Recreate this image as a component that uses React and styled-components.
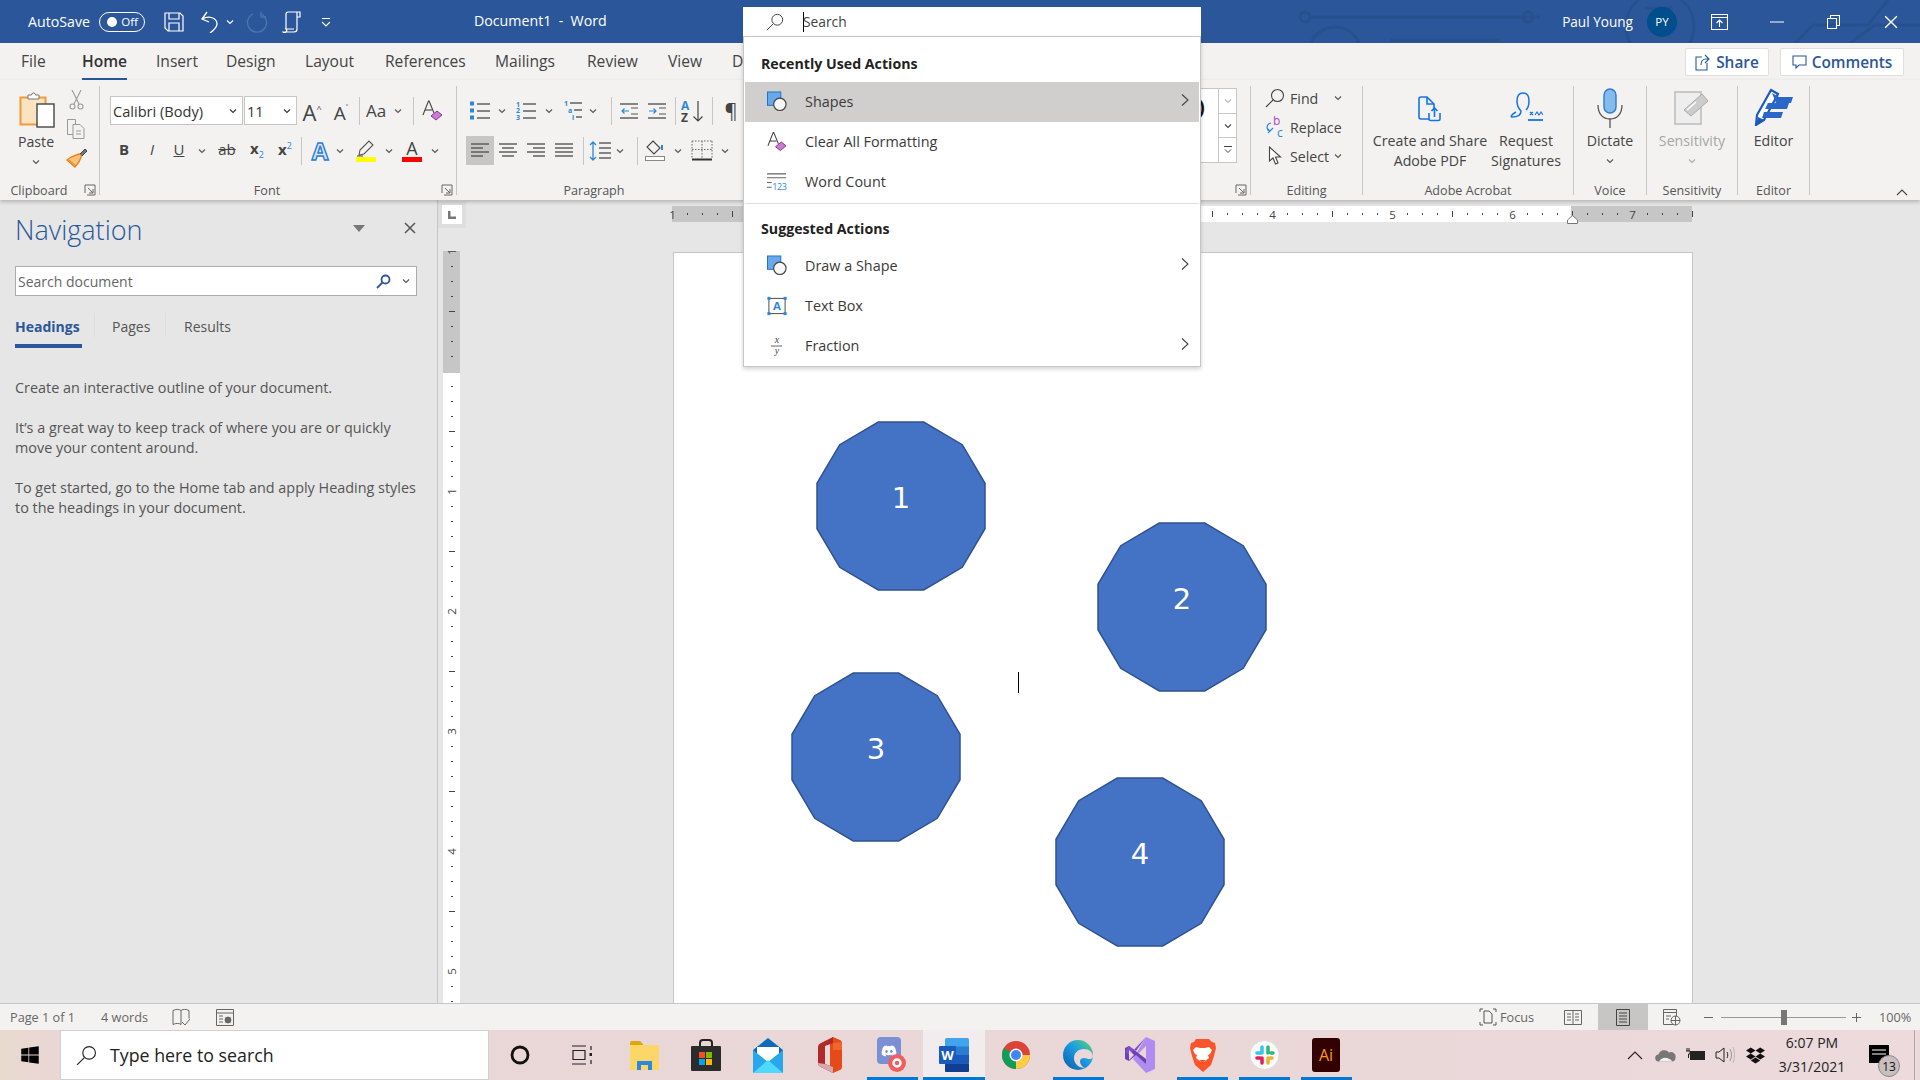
import React from "react";
import styled, { createGlobalStyle } from "styled-components";
import { FaWindows, FaDropbox, FaDiscord } from "react-icons/fa";

const BLUE = "#2b579a";
const INK = "#444";
const UI = `"Open Sans", "Noto Sans", sans-serif`;

const Global = createGlobalStyle`
  html, body { margin: 0; height: 100%; overflow: hidden; background: #e6e6e6; }
  * { box-sizing: border-box; }
  #root { height: 100%; }
`;

const Screen = styled.div`
  position: relative;
  width: 1920px;
  height: 1080px;
  display: flex;
  flex-direction: column;
  overflow: hidden;
  font-family: ${UI};
  color: ${INK};
`;

/* ---------- title bar ---------- */
const TitleBar = styled.div`
  position: relative;
  height: 43px;
  flex: none;
  display: flex;
  align-items: center;
  padding: 0 1px 0 28px;
  background: ${BLUE};
  color: #fff;
  font-size: 14.2px;
  overflow: hidden;
`;
const Circuit = styled.svg`
  position: absolute;
  left: 1240px;
  top: 0;
`;
const AutoSave = styled.span`
  position: relative;
  width: 71px;
`;
const Toggle = styled.span`
  position: relative;
  width: 46px;
  height: 20px;
  flex: none;
  display: flex;
  align-items: center;
  justify-content: space-between;
  padding: 0 6px 0 7px;
  border: 1px solid #fff;
  border-radius: 10px;
  font-size: 11.5px;
  &::before {
    content: "";
    width: 10px;
    height: 10px;
    border-radius: 50%;
    background: #fff;
  }
`;
const Qat = styled.span`
  position: relative;
  flex: none;
  width: ${(p) => p.$w}px;
  margin-left: ${(p) => p.$ml || 0}px;
  display: flex;
  justify-content: center;
  align-items: center;
`;
const DocTitle = styled.span`
  position: relative;
  margin-left: 127px;
  margin-top: -2px;
  white-space: pre;
`;
const UserName = styled.span`
  position: relative;
  margin-left: auto;
  font-size: 13.6px;
`;
const Avatar = styled.span`
  position: relative;
  width: 30px;
  height: 30px;
  margin: 0 14px;
  border-radius: 50%;
  background: #004e8c;
  display: flex;
  align-items: center;
  justify-content: center;
  font-size: 11.5px;
`;
const WinBtn = styled.span`
  position: relative;
  width: 57px;
  display: flex;
  justify-content: center;
`;

/* ---------- ribbon tabs ---------- */
const TabBar = styled.div`
  height: 37px;
  flex: none;
  display: flex;
  align-items: flex-start;
  padding: 5px 16px 0 21px;
  background: #f3f2f1;
`;
const Tab = styled.span`
  width: ${(p) => p.$w}px;
  flex: none;
  height: 32px;
  padding-top: 2px;
  font-size: 15.6px;
  line-height: 22px;
  white-space: nowrap;
  overflow: visible;
  & > b {
    display: inline-block;
    height: 32px;
    font-weight: 600;
    color: #333;
    border-bottom: 4px solid ${BLUE};
  }
`;
const TabActions = styled.div`
  margin-left: auto;
  display: flex;
  gap: 11px;
`;
const ActionButton = styled.span`
  width: ${(p) => p.$w}px;
  height: 28px;
  display: flex;
  align-items: center;
  justify-content: center;
  gap: 5px;
  background: #fff;
  border: 1px solid #e1dfdd;
  border-radius: 2px;
  color: ${BLUE};
  font-size: 15.4px;
  font-weight: 600;
`;

/* ---------- ribbon ---------- */
const Ribbon = styled.div`
  position: relative;
  z-index: 2;
  height: 120px;
  flex: none;
  display: flex;
  padding: 6px 0 5px;
  background: #f3f2f1;
  box-shadow: 0 2px 4px rgba(0, 0, 0, 0.22);
`;
const Group = styled.div`
  position: relative;
  width: ${(p) => p.$w}px;
  flex: none;
  display: flex;
  flex-direction: column;
  border-right: 1px solid #c8c6c4;
`;
const GroupBody = styled.div`
  flex: 1;
  min-height: 0;
  display: flex;
  flex-direction: ${(p) => (p.$column ? "column" : "row")};
  gap: ${(p) => p.$gap || 0}px;
  padding: ${(p) => p.$pad || "0"};
`;
const GroupLabel = styled.div`
  height: 18px;
  margin-bottom: -5px;
  line-height: 18px;
  font-size: 12.6px;
  text-align: center;
  white-space: nowrap;
  padding-right: ${(p) => p.$pr || 0}px;
  color: #555;
`;
const Launcher = styled.svg`
  position: absolute;
  right: 3px;
  bottom: -1px;
`;
const ToolRow = styled.div`
  height: 29px;
  display: flex;
  align-items: center;
  padding-left: ${(p) => p.$pl || 0}px;
`;
const Tool = styled.span`
  width: ${(p) => p.$w}px;
  margin-left: ${(p) => p.$ml || 0}px;
  height: 29px;
  flex: none;
  display: flex;
  flex-direction: column;
  align-items: center;
  justify-content: center;
  padding-bottom: ${(p) => (p.$up ? 3 : 0)}px;
  background: ${(p) => (p.$on ? "#c8c6c4" : "transparent")};
  font-size: ${(p) => p.$size || 15}px;
  font-weight: ${(p) => p.$weight || 400};
  font-style: ${(p) => (p.$italic ? "italic" : "normal")};
  text-decoration: ${(p) => (p.$under ? "underline" : "none")};
  color: #444;
  & sub, & sup { font-size: 9px; color: #2b88d8; font-weight: 400; }
`;
const Strike = styled.span`
  text-decoration: line-through;
`;
const Combo = styled.span`
  width: ${(p) => p.$w}px;
  margin-right: 1px;
  height: 29px;
  flex: none;
  display: flex;
  align-items: center;
  justify-content: space-between;
  padding: 0 5px 0 2px;
  background: #fff;
  border: 1px solid #c8c6c4;
  font-size: 14.6px;
  color: #333;
`;
const Vr = styled.span`
  width: 1px;
  height: 28px;
  flex: none;
  margin-left: ${(p) => p.$ml || 0}px;
  background: #c8c6c4;
`;
const ColorBar = styled.span`
  width: 20px;
  height: 5px;
  background: ${(p) => p.$c};
`;
const StackA = styled.span`
  font-size: 18px;
  line-height: 18px;
  color: #444;
`;
const EffectA = styled.span`
  font-size: 24px;
  line-height: 28px;
  font-weight: 700;
  color: #d6e8f8;
  -webkit-text-stroke: 1.4px #2b7cd3;
`;
const GrowA = styled.span`
  font-size: ${(p) => p.$s}px;
  line-height: 20px;
  color: #444;
  & > i {
    font-style: normal;
    font-size: 9px;
    vertical-align: 9px;
    color: #444;
  }
`;
const PasteCol = styled.div`
  width: 60px;
  margin-left: 6px;
  padding-top: 5px;
  display: flex;
  flex-direction: column;
  align-items: center;
  font-size: 14.2px;
  line-height: 20px;
  & > svg { margin-left: 2px; }
  & > span { margin-top: 3px; }
`;
const MiniCol = styled.div`
  width: 24px;
  margin-left: -2px;
  display: flex;
  flex-direction: column;
  align-items: center;
  padding-top: 4px;
  gap: 9px;
`;
const Gallery = styled.div`
  margin: 2px 13px 0 auto;
  width: 36px;
  height: 75px;
  display: flex;
`;
const GalleryPeek = styled.div`
  flex: 1;
  background: #fff;
  border: 1px solid #c8c6c4;
  border-right: 0;
  overflow: hidden;
  font-size: 20px;
  font-weight: 700;
  color: #111;
  line-height: 26px;
  padding-top: 5px;
  margin-left: -4px;
`;
const GalleryScroll = styled.div`
  width: 19px;
  display: flex;
  flex-direction: column;
  border: 1px solid #c8c6c4;
`;
const GalleryBtn = styled.span`
  flex: 1;
  display: flex;
  align-items: center;
  justify-content: center;
  background: #fff;
  & + & { border-top: 1px solid #c8c6c4; }
`;
const EditRow = styled.div`
  height: 24px;
  display: flex;
  align-items: center;
  font-size: 14.2px;
  white-space: nowrap;
`;
const EditIcon = styled.span`
  width: 24px;
  flex: none;
  display: flex;
  justify-content: center;
`;
const EditLabel = styled.span`
  margin-left: 3px;
  width: ${(p) => (p.$w ? `${p.$w}px` : "auto")};
  margin-right: ${(p) => p.$mr || 0}px;
`;
const BigBtn = styled.div`
  width: ${(p) => p.$w}px;
  flex: none;
  padding-top: 2px;
  display: flex;
  flex-direction: column;
  align-items: center;
  font-size: 14.2px;
  line-height: 20px;
  white-space: nowrap;
  color: ${(p) => (p.$off ? "#a6a6a6" : "#444")};
`;
const BigIcon = styled.div`
  height: 43px;
  display: flex;
  align-items: ${(p) => (p.$low ? "flex-end" : "flex-start")};
  padding-bottom: ${(p) => (p.$low ? 9 : 0)}px;
`;
const BigChevron = styled.div`
  height: 20px;
  display: flex;
  align-items: center;
`;
const Collapse = styled.svg`
  position: absolute;
  left: 1896px;
  top: 108px;
`;

/* ---------- search menu ---------- */
const SearchMenu = styled.div`
  position: absolute;
  z-index: 5;
  left: 743px;
  top: 7px;
  width: 458px;
`;
const SearchInput = styled.div`
  height: 29px;
  display: flex;
  align-items: center;
  padding-left: 23px;
  background: #fff;
  font-size: 13.8px;
  color: #444;
`;
const Caret = styled.span`
  width: 1px;
  height: 20px;
  margin-left: 19px;
  margin-right: -1px;
  background: #000;
`;
const MenuBody = styled.div`
  background: #fff;
  border: 1px solid #c8c6c4;
  box-shadow: 0 2px 4px rgba(0, 0, 0, 0.18);
  padding: 0 1px;
`;
const MenuHead = styled.div`
  height: ${(p) => p.$h}px;
  padding: ${(p) => p.$pt}px 0 0 16px;
  display: flex;
  align-items: center;
  font-size: 14.2px;
  font-weight: 700;
  color: #222;
`;
const MenuRow = styled.div`
  height: 40px;
  display: flex;
  align-items: center;
  padding: 0 9px 2px 22px;
  background: ${(p) => (p.$on ? "#d0cfcd" : "transparent")};
  font-size: 14.4px;
  color: #3b3a39;
`;
const MenuIcon = styled.span`
  width: 20px;
  margin-right: 18px;
  margin-bottom: -1px;
  display: flex;
  justify-content: center;
`;
const MenuArrow = styled.svg`
  margin-left: auto;
  margin-top: -2px;
`;
const MenuLine = styled.div`
  height: 1px;
  margin-top: 1px;
  background: #e1dfdd;
`;

/* ---------- main ---------- */
const Main = styled.div`
  flex: 1;
  min-height: 0;
  display: flex;
  overflow: hidden;
`;
const NavPane = styled.aside`
  width: 438px;
  flex: none;
  padding: 0 20px 0 15px;
  background: #e6e6e6;
  border-right: 1px solid #c6c6c6;
`;
const NavHead = styled.div`
  height: 66px;
  display: flex;
  align-items: flex-start;
  padding-top: 11px;
`;
const NavTitle = styled.h1`
  margin: 0;
  font-size: 27px;
  line-height: 38px;
  font-weight: 300;
  color: ${BLUE};
`;
const NavHeadIcons = styled.div`
  margin-left: auto;
  margin-top: 11px;
  display: flex;
  align-items: center;
  gap: 39px;
  padding-right: 1px;
`;
const NavSearch = styled.div`
  height: 30px;
  display: flex;
  align-items: center;
  padding: 0 6px 0 2px;
  background: #fff;
  border: 1px solid #ababab;
  font-size: 14px;
  color: #666;
`;
const NavSearchIcons = styled.span`
  margin-left: auto;
  display: flex;
  align-items: center;
  gap: 11px;
`;
const NavTabs = styled.div`
  height: 40px;
  margin-top: 12px;
  display: flex;
`;
const NavTab = styled.span`
  width: ${(p) => p.$w}px;
  margin-left: ${(p) => p.$ml || 0}px;
  padding-top: 9px;
  font-size: 14px;
  line-height: 20px;
  white-space: nowrap;
  font-weight: ${(p) => (p.$on ? 700 : 400)};
  color: ${(p) => (p.$on ? BLUE : "#555")};
  border-bottom: 4px solid ${(p) => (p.$on ? BLUE : "transparent")};
`;
const NavTabSep = styled.span`
  width: 1px;
  height: 24px;
  margin: 5px 0 0 ${(p) => p.$ml}px;
  background: #dedede;
`;
const NavText = styled.p`
  margin: 0 0 20px;
  font-size: 14.4px;
  line-height: 20px;
  white-space: nowrap;
  color: #555;
  &:first-of-type { margin-top: 30px; }
`;

const DocArea = styled.div`
  flex: 1;
  display: flex;
  background: #e6e6e6;
`;
const SideCol = styled.div`
  width: 28px;
  flex: none;
  padding-top: 1px;
`;
const Corner = styled.div`
  height: 27px;
  padding: 4px;
  background: #dedede;
`;
const CornerInner = styled.div`
  height: 19px;
  background: #fff;
  display: flex;
  align-items: center;
  justify-content: center;
`;
const VRuler = styled.div`
  width: 17px;
  height: 780px;
  margin: 23px 0 0 5px;
  overflow: hidden;
  background: linear-gradient(#c6c6c6 0 122px, #fff 122px);
`;
const VRulerCells = styled.div`
  margin-top: -7px;
  display: flex;
  flex-direction: column;
`;
const VCell = styled.span`
  height: 15px;
  flex: none;
  display: flex;
  align-items: center;
  justify-content: center;
  font-size: 11.5px;
  color: #444;
  & > b {
    font-weight: 400;
    transform: rotate(-90deg);
  }
  & > i {
    display: block;
    background: #444;
    width: ${(p) => (p.$long ? 6 : 2)}px;
    height: 1px;
  }
`;
const PageCol = styled.div`
  flex: 1;
  min-width: 0;
  display: flex;
  flex-direction: column;
`;
const HRuler = styled.div`
  position: relative;
  width: 1020px;
  height: 16px;
  margin: 6px 0 0 206px;
  display: flex;
  background: linear-gradient(
    90deg,
    #c6c6c6 0 120px,
    #fff 120px 899px,
    #c6c6c6 899px
  );
`;
const HRulerCells = styled.div`
  margin-left: -7px;
  display: flex;
`;
const HCell = styled.span`
  width: 15px;
  flex: none;
  display: flex;
  align-items: center;
  justify-content: center;
  font-size: 11.5px;
  color: #444;
  & > i {
    display: block;
    background: #444;
    height: ${(p) => (p.$long ? 6 : 2)}px;
    width: 1px;
  }
`;
const Indent = styled.svg`
  position: absolute;
  left: 895px;
  top: 9px;
`;
const Page = styled.div`
  position: relative;
  flex: 1;
  width: 1020px;
  margin: 30px 0 0 207px;
  background: #fff;
  border: 1px solid #c6c6c6;
  border-bottom: 0;
`;
const ShapeBox = styled.div`
  position: absolute;
  left: ${(p) => p.$x}px;
  top: ${(p) => p.$y}px;
  width: 170px;
  height: 170px;
  display: flex;
  justify-content: center;
  padding-top: 60px;
  color: #fff;
  font-family: "DejaVu Sans", sans-serif;
  font-size: 29px;
  line-height: 34px;
  & > svg { position: absolute; left: 0; top: 0; overflow: visible; }
  & > span { position: relative; }
`;
const TextCursor = styled.span`
  position: absolute;
  left: 344px;
  top: 419px;
  width: 1px;
  height: 21px;
  background: #000;
`;

/* ---------- status bar ---------- */
const StatusBar = styled.div`
  height: 27px;
  flex: none;
  display: flex;
  align-items: stretch;
  padding: 0 8px 0 10px;
  background: #f3f2f1;
  border-top: 1px solid #c8c6c4;
  font-size: 12.7px;
  color: #666;
`;
const StatusItem = styled.span`
  width: ${(p) => p.$w}px;
  margin-left: ${(p) => p.$ml || 0}px;
  flex: none;
  display: flex;
  align-items: center;
  justify-content: ${(p) => (p.$center ? "center" : "flex-start")};
  gap: 3px;
  white-space: nowrap;
  background: ${(p) => (p.$on ? "#c8c6c4" : "transparent")};
`;
const StatusRight = styled.div`
  margin-left: auto;
  display: flex;
`;
const Slider = styled.span`
  position: relative;
  width: 125px;
  flex: none;
  margin: 13px 0;
  height: 1px;
  background: #999;
  &::after {
    content: "";
    position: absolute;
    left: 60px;
    top: -7px;
    width: 6px;
    height: 15px;
    background: #777;
  }
`;

/* ---------- taskbar ---------- */
const Taskbar = styled.div`
  height: 50px;
  flex: none;
  display: flex;
  background: linear-gradient(90deg, #e8dacf 0, #e9d6d6 60px, #ead7d8 1400px, #ecdadd 100%);
`;
const StartBtn = styled.span`
  width: 60px;
  display: flex;
  align-items: center;
  justify-content: center;
`;
const TaskSearch = styled.div`
  width: 429px;
  display: flex;
  align-items: center;
  padding-left: 15px;
  gap: 13px;
  background: #fff;
  border: 1px solid #d0d0d0;
  font-size: 17.8px;
  color: #222;
`;
const TaskCell = styled.span`
  position: relative;
  width: 62px;
  flex: none;
  display: flex;
  align-items: center;
  justify-content: center;
  background: ${(p) => (p.$active ? "#f3ecee" : "transparent")};
  &::after {
    content: "";
    display: ${(p) => (p.$open ? "block" : "none")};
    position: absolute;
    bottom: 0;
    left: ${(p) => (p.$active ? 0 : 6)}px;
    right: ${(p) => (p.$active ? 0 : 5)}px;
    height: 3px;
    background: #0078d4;
  }
`;
const Tray = styled.div`
  margin-left: auto;
  display: flex;
`;
const TrayIcon = styled.span`
  width: 30px;
  display: flex;
  align-items: center;
  justify-content: center;
`;
const Clock = styled.span`
  width: 84px;
  display: flex;
  flex-direction: column;
  justify-content: center;
  align-items: center;
  font-size: 14px;
  line-height: 24px;
  color: #222;
`;
const Notify = styled.span`
  position: relative;
  width: 60px;
  padding-left: 15px;
  padding-top: 15px;
`;
const NotifyBadge = styled.span`
  position: absolute;
  left: 24px;
  top: 25px;
  width: 22px;
  height: 22px;
  border-radius: 50%;
  background: #c9bfc0;
  border: 1px solid #888;
  display: flex;
  align-items: center;
  justify-content: center;
  font-size: 12px;
  color: #111;
`;
const ShowDesktop = styled.span`
  width: 6px;
  border-left: 1px solid #aaa;
`;

/* ---------- icons ---------- */
const Chev = ({ c = "#555", s = 8 }) => (
  <svg width={s} height={s} viewBox="0 0 8 8" fill="none" stroke={c} strokeWidth="1.1">
    <path d="M1 2.5l3 3 3-3" />
  </svg>
);
const Mag = ({ c = "#444", s = 20, w = 1.1 }) => (
  <svg width={s} height={s} viewBox="0 0 20 20" fill="none" stroke={c} strokeWidth={w}>
    <circle cx="12.5" cy="7.5" r="6" />
    <path d="M8 12l-7 7" />
  </svg>
);
const Arrow = () => (
  <MenuArrow width="10" height="14" viewBox="0 0 10 14" fill="none" stroke="#444" strokeWidth="1.1">
    <path d="M2 1.5l6 5.5-6 5.5" />
  </MenuArrow>
);
const Lines = ({ rows, x1 = 0, x2 = 18, c = "#555" }) => (
  <>
    {rows.map((y, i) => (
      <path key={i} d={`M${Array.isArray(x1) ? x1[i] : x1} ${y}H${Array.isArray(x2) ? x2[i] : x2}`} stroke={c} strokeWidth="1.4" />
    ))}
  </>
);
const AlignIcon = ({ x1, x2 }) => (
  <svg width="18" height="17" viewBox="0 0 18 17" fill="none">
    <Lines rows={[2, 6, 10, 14]} x1={x1} x2={x2} />
  </svg>
);
const ShapesIcon = () => (
  <svg width="21" height="21" viewBox="0 0 21 21">
    <rect x="0.5" y="0.5" width="14" height="14" fill="#6aa9e9" stroke="#1e6fc9" />
    <circle cx="13.5" cy="13.5" r="6.5" fill="#f7f7f7" stroke="#444" strokeWidth="1.2" />
  </svg>
);
const ClearIcon = ({ s = 21 }) => (
  <svg width={s} height={s} viewBox="0 0 21 21" fill="none">
    <path d="M1 15L6.5 1h.6L12 13" stroke="#444" strokeWidth="1.1" />
    <path d="M3 10h7" stroke="#444" strokeWidth="1.1" />
    <path d="M9 16l6-5 5 4-6 5z" fill="#c77dd0" stroke="#8d2c9b" />
  </svg>
);
const WordCountIcon = () => (
  <svg width="21" height="20" viewBox="0 0 21 20">
    <path d="M0 1.5h20M0 5.5h20M0 10.5h5M0 15.5h5" stroke="#666" strokeWidth="1.2" />
    <text x="5.5" y="18" fontSize="9.5" letterSpacing="-0.4" fontFamily="Open Sans" fill="#2b88d8">123</text>
  </svg>
);
const TextBoxIcon = () => (
  <svg width="21" height="20" viewBox="0 0 21 20" fill="none">
    <rect x="2" y="2" width="17" height="16" stroke="#444" />
    <text x="10.5" y="14.5" textAnchor="middle" fontSize="12" fontWeight="700" fontFamily="Open Sans" fill="#2b88d8">A</text>
    {[[2, 2], [19, 2], [2, 18], [19, 18]].map(([x, y]) => (
      <rect key={x + "-" + y} x={x - 1.6} y={y - 1.6} width="3.2" height="3.2" fill="#2b88d8" />
    ))}
  </svg>
);
const FractionIcon = () => (
  <svg width="14" height="22" viewBox="0 0 14 22" fill="none">
    <text x="7" y="8" textAnchor="middle" fontSize="10" fontStyle="italic" fontFamily="Liberation Serif" fill="#444">x</text>
    <path d="M1 11h11" stroke="#666" />
    <text x="7" y="19" textAnchor="middle" fontSize="10" fontStyle="italic" fontFamily="Liberation Serif" fill="#444">y</text>
  </svg>
);
const PasteIcon = () => (
  <svg width="36" height="38" viewBox="0 0 36 38" fill="none">
    <path d="M1.5 6.5h25v27h-25z" fill="#f9e3c0" stroke="#ed9b3b" strokeWidth="2" />
    <path d="M9 7V4h3.5a2 2 0 0 1 4 0H20v4H9z" fill="#fff" stroke="#777" />
    <rect x="18" y="13" width="17" height="23" fill="#fff" stroke="#444" strokeWidth="1.4" />
  </svg>
);
const ScissorsIcon = () => (
  <svg width="15" height="20" viewBox="0 0 15 20" fill="none" stroke="#999" strokeWidth="1.1">
    <path d="M3 0l7 14M12 0L5 14" />
    <circle cx="3.5" cy="16.5" r="2.5" />
    <circle cx="11.5" cy="16.5" r="2.5" />
  </svg>
);
const CopyIcon = () => (
  <svg width="20" height="20" viewBox="0 0 20 20" fill="none" stroke="#999">
    <path d="M1.5.5h8v15h-8z" />
    <path d="M7 5.5h7l4 4v10H7z" fill="#f3f2f1" />
    <path d="M10 12h5M10 15h5" />
  </svg>
);
const BrushIcon = () => (
  <svg width="22" height="20" viewBox="0 0 22 20" fill="none">
    <path d="M14 6l-8 3-4 3 8 7 4-5 3-7z" fill="#f6c27a" stroke="#e8831a" strokeWidth="1.4" />
    <path d="M15 6l5-5 2 2-5 5" fill="#777" stroke="#444" />
    <path d="M4 12l7 6" stroke="#e8831a" />
  </svg>
);
const PenMark = () => (
  <svg width="20" height="18" viewBox="0 0 20 18" fill="none" stroke="#555" strokeWidth="1.1">
    <path d="M3 16l1-5 9-9 4 4-9 9z" />
    <path d="M1 17h6" />
  </svg>
);
const BulletIcon = () => (
  <svg width="20" height="20" viewBox="0 0 20 20">
    {[2, 9, 16].map((y) => (
      <rect key={y} x="0" y={y - 1.5} width="4" height="4" fill="#2b88d8" />
    ))}
    <Lines rows={[3, 10, 17]} x1={7} x2={20} />
  </svg>
);
const NumberIcon = () => (
  <svg width="20" height="21" viewBox="0 0 20 21">
    {[1, 2, 3].map((n) => (
      <text key={n} x="0" y={n * 6.6} fontSize="7" fontWeight="700" fontFamily="Open Sans" fill="#2b88d8">{n}</text>
    ))}
    <Lines rows={[4, 11, 18]} x1={7} x2={20} />
  </svg>
);
const MultiIcon = () => (
  <svg width="20" height="21" viewBox="0 0 20 21">
    <text x="0" y="6" fontSize="7" fontWeight="700" fontFamily="Open Sans" fill="#2b88d8">1</text>
    <text x="4" y="13" fontSize="7" fontWeight="700" fontFamily="Open Sans" fill="#2b88d8">a</text>
    <text x="8" y="20" fontSize="7" fontWeight="700" fontFamily="Open Sans" fill="#2b88d8">i</text>
    <Lines rows={[3, 10, 17]} x1={[6, 10, 12]} x2={[18, 18, 18]} />
  </svg>
);
const IndentIcon = ({ flip }) => (
  <svg width="18" height="18" viewBox="0 0 18 18" fill="none">
    <Lines rows={[2, 16]} x2={18} />
    <path d="M11 6h7M11 12h7" stroke="#555" strokeWidth="1.2" />
    <path d={flip ? "M1 9h7M5.5 6.5L8 9l-2.5 2.5" : "M2 9h7M4.5 6.5L2 9l2.5 2.5"} stroke="#2b88d8" strokeWidth="1.2" />
  </svg>
);
const SortIcon = () => (
  <svg width="24" height="24" viewBox="0 0 24 24" fill="none">
    <text x="0" y="11" fontSize="12" fontWeight="700" fontFamily="Open Sans" fill="#2b88d8">A</text>
    <text x="0" y="23" fontSize="12" fontWeight="700" fontFamily="Open Sans" fill="#444">Z</text>
    <path d="M17 2v20M12.5 17.5L17 22l4.5-4.5" stroke="#444" strokeWidth="1.2" />
  </svg>
);
const LineSpacingIcon = () => (
  <svg width="22" height="22" viewBox="0 0 22 22" fill="none">
    <path d="M4 2v18M1 5l3-3 3 3M1 17l3 3 3-3" stroke="#2b88d8" strokeWidth="1.3" />
    <Lines rows={[3, 8, 13, 18]} x1={10} x2={22} />
  </svg>
);
const ShadeIcon = () => (
  <svg width="22" height="22" viewBox="0 0 22 22" fill="none">
    <path d="M9 1l7 7-6 6-7-7z" stroke="#444" strokeWidth="1.1" />
    <path d="M18 5v5" stroke="#2b88d8" strokeWidth="2" />
    <rect x="1.5" y="16.5" width="19" height="4" stroke="#888" fill="#fff" />
  </svg>
);
const BorderIcon = () => (
  <svg width="22" height="22" viewBox="0 0 22 22" fill="none">
    <path d="M1 1v17M11 1v17M21 1v17M1 1h20M1 9.5h20" stroke="#666" strokeDasharray="1.5 1.5" />
    <path d="M1 19.5h20" stroke="#333" strokeWidth="2" />
  </svg>
);
const ReplaceIcon = () => (
  <svg width="20" height="22" viewBox="0 0 20 22" fill="none">
    <text x="8" y="9" fontSize="12" fontFamily="Open Sans" fill="#b146c2">b</text>
    <text x="12" y="21" fontSize="12" fontFamily="Open Sans" fill="#2b88d8">c</text>
    <path d="M6 7C1 8 1 14 5 15M3 13l2 2-2 2M8 12l-3 3" stroke="#2b88d8" strokeWidth="1.2" />
  </svg>
);
const SelectIcon = () => (
  <svg width="14" height="20" viewBox="0 0 14 20" fill="#fff" stroke="#444" strokeWidth="1.1">
    <path d="M1.5 1v14l3.5-3 2.5 6 2.5-1-2.5-6h5z" />
  </svg>
);
const PdfIcon = () => (
  <svg width="24" height="26" viewBox="0 0 24 26" fill="none" stroke="#1473e6" strokeWidth="1.6">
    <path d="M11 23H3a2 2 0 0 1-2-2V3a2 2 0 0 1 2-2h6l7 7v4" />
    <path d="M9 1v7h7" />
    <path d="M11 17v6a1.5 1.5 0 0 0 1.5 1.5h8A1.5 1.5 0 0 0 22 23v-6" />
    <path d="M16.5 21v-9M13.5 15l3-3 3 3" />
  </svg>
);
const SignIcon = () => (
  <svg width="33" height="38" viewBox="0 0 33 38" fill="none" stroke="#1473e6" strokeWidth="1.5">
    <path d="M2 33c8 0 9-4 9-6-3-3-4-6-4-10 0-5 2-8 6-8s6 3 6 8c0 4-1 7-3 9" />
    <path d="M2 33c-2 0 0-3 4-5" />
    <path d="M18 36h15" strokeWidth="1.8" />
    <path d="M20 28l3 3m0-3l-3 3M25 31l2-3 2 3 2-3 2 3" strokeWidth="1.1" />
  </svg>
);
const MicIcon = () => (
  <svg width="26" height="40" viewBox="0 0 26 40" fill="none">
    <rect x="7" y="1" width="12" height="24" rx="6" fill="#83bbea" stroke="#2b7cd3" strokeWidth="1.4" />
    <path d="M1 17c0 9 5 14 12 14s12-5 12-14M13 31v9" stroke="#555" strokeWidth="1.3" />
  </svg>
);
const SensIcon = () => (
  <svg width="36" height="37" viewBox="0 0 36 37" fill="none">
    <rect x="1" y="4" width="26" height="32" fill="#eee" stroke="#bbb" strokeWidth="1.5" />
    <path d="M10 22l18-16 6 7-17 15z" fill="#ccc" stroke="#aaa" />
    <path d="M13 22l9-8" stroke="#fff" strokeWidth="1.5" />
  </svg>
);
const EditorIcon = () => (
  <svg width="39" height="38" viewBox="0 0 39 38">
    <path d="M2 37l1-10L17 2l7 4-14 26z" fill="#fff" stroke="#185abd" strokeWidth="2.2" />
    <path d="M18 5l7 4 14 0-2 6H22zM14 15h21l-2 6H11zM10 24h19l-2 6H8z" fill="#2b67c6" />
    <path d="M2 37l2-8 6 3z" fill="#185abd" />
  </svg>
);
const ShareIcon = () => (
  <svg width="16" height="17" viewBox="0 0 16 17" fill="none" stroke="#2b579a" strokeWidth="1.1">
    <path d="M7 3H1v13h11V9" />
    <path d="M6 11c0-4 2-6 5-6h2M10 1l4 4-4 4" />
  </svg>
);
const CommentIcon = () => (
  <svg width="15" height="15" viewBox="0 0 15 15" fill="none" stroke="#2b579a" strokeWidth="1.1">
    <path d="M1 1h13v9H7l-3 3v-3H1z" />
  </svg>
);
const X = ({ s = 12, c = "#555", w = 1.5 }) => (
  <svg width={s} height={s} viewBox="0 0 12 12" fill="none" stroke={c} strokeWidth={w}>
    <path d="M1 1l10 10M11 1L1 11" />
  </svg>
);

const TASK_ICONS = {
  cortana: (
    <svg width="20" height="20" viewBox="0 0 20 20" fill="none" stroke="#111" strokeWidth="2.8"><circle cx="10" cy="10" r="8" /></svg>
  ),
  taskview: (
    <svg width="20" height="20" viewBox="0 0 20 20" fill="none" stroke="#222" strokeWidth="1.2">
      <path d="M0 1h14M0 19h14M1 5.5h12v9H1z" />
      <path d="M19 1v4M19 15v4" />
      <rect x="17.5" y="8" width="3" height="3" fill="#222" stroke="none" />
    </svg>
  ),
  explorer: (
    <svg width="29" height="29" viewBox="0 0 29 29">
      <path d="M0 2a2 2 0 0 1 2-2h8l3 3v2H0z" fill="#e2a50f" />
      <rect y="4" width="29" height="25" fill="#fcd768" />
      <path d="M7 29v-9h15v9h-4v-5h-7v5z" fill="#2b8ae0" />
    </svg>
  ),
  store: (
    <svg width="30" height="32" viewBox="0 0 30 32">
      <path d="M9 8V4a3 3 0 0 1 3-3h6a3 3 0 0 1 3 3v4" fill="none" stroke="#222" strokeWidth="2" />
      <rect y="7" width="30" height="25" rx="1" fill="#2c2c2c" />
      <rect x="8" y="13" width="6" height="6" fill="#f25022" />
      <rect x="15" y="13" width="6" height="6" fill="#7fba00" />
      <rect x="8" y="20" width="6" height="6" fill="#00a4ef" />
      <rect x="15" y="20" width="6" height="6" fill="#ffb900" />
    </svg>
  ),
  mail: (
    <svg width="30" height="35" viewBox="0 0 30 35">
      <path d="M15 0L0 12v23h30V12z" fill="#0f6cbd" />
      <path d="M4 9h22v12L15 26 4 21z" fill="#fff" />
      <path d="M0 12l15 12 15-12v23H0z" fill="#28a8ea" />
      <path d="M0 35l15-13 15 13z" fill="#50d9ff" />
    </svg>
  ),
  office: (
    <svg width="24" height="36" viewBox="0 0 24 36">
      <path d="M15 0l7 3c1 .5 2 1.5 2 3v24c0 1.5-1 2.5-2 3l-7 3-3-3V3z" fill="#e64a19" />
      <path d="M15 0L3 6C1 7 0 8 0 10v16c0 2 1 3 3 4l12 6v-6L7 27V9l8-3z" fill="#b02a2a" />
      <path d="M15 6l9-1v8h-9z" fill="#f0672c" />
      <path d="M0 26l7 1 8 3v6L3 30c-2-1-3-2-3-4z" fill="#d9a7b0" />
    </svg>
  ),
  discord: (
    <svg width="30" height="36" viewBox="0 0 30 36">
      <rect width="24" height="27" rx="4" fill="#7b8fd4" />
      <foreignObject x="4" y="5" width="16" height="16"><FaDiscord color="#fff" size={16} /></foreignObject>
      <circle cx="20" cy="26" r="9" fill="#ef5f5f" />
      <circle cx="20" cy="26" r="3.5" fill="none" stroke="#fff" strokeWidth="2.5" />
    </svg>
  ),
  word: (
    <svg width="30" height="34" viewBox="0 0 30 34">
      <rect x="6" y="0" width="24" height="34" rx="1.5" fill="#41a5ee" />
      <rect x="6" y="8.5" width="24" height="8.5" fill="#2b7cd3" />
      <rect x="6" y="17" width="24" height="8.5" fill="#185abd" />
      <rect x="6" y="25.5" width="24" height="8.5" rx="1" fill="#103f91" />
      <rect x="0" y="8" width="17" height="18" rx="1" fill="#185abd" />
      <text x="8.5" y="22" textAnchor="middle" fontSize="13" fontWeight="700" fontFamily="Open Sans" fill="#fff">W</text>
    </svg>
  ),
  chrome: (
    <svg width="28" height="28" viewBox="0 0 28 28">
      <circle cx="14" cy="14" r="14" fill="#db4437" />
      <path d="M14 14L1.9 7A14 14 0 0 0 14 28l7-12z" fill="#0f9d58" />
      <path d="M14 14h14A14 14 0 0 1 14 28z" fill="#ffcd40" />
      <circle cx="14" cy="14" r="6.5" fill="#fff" />
      <circle cx="14" cy="14" r="5" fill="#4285f4" />
    </svg>
  ),
  edge: (
    <svg width="30" height="30" viewBox="0 0 30 30">
      <defs>
        <linearGradient id="edgeA" x1="0" y1="1" x2="1" y2="0">
          <stop offset="0" stopColor="#0c59a4" />
          <stop offset="0.55" stopColor="#1b9de2" />
          <stop offset="1" stopColor="#5fd66a" />
        </linearGradient>
      </defs>
      <circle cx="15" cy="15" r="15" fill="url(#edgeA)" />
      <path d="M30 17c0-5-4-8-9-8-6 0-10 4-10 9 0 6 5 10 11 10-3-1-5-4-5-7 0-2 2-3 4-3 4 0 6 3 9-1z" fill="#ebd7d8" />
    </svg>
  ),
  vs: (
    <svg width="30" height="36" viewBox="0 0 30 36">
      <path d="M21 0l9 4v28l-9 4L8 22z" fill="#b08cf0" />
      <path d="M21 9l-9 9 9 9z" fill="#e9d6d6" />
      <path d="M0 11l4-2 17 13v5L11 18l-7 6-4-2z" fill="#6f3fb8" />
      <path d="M21 0L4 18l-4-3 4-6 7 5L21 0z" fill="#7f4fc9" />
      <path d="M4 13v10l5-5z" fill="#e9d6d6" />
    </svg>
  ),
  brave: (
    <svg width="27" height="33" viewBox="0 0 27 33">
      <path d="M7 0h13l3 3 3 1 1 5-2 8-3 9-8 7-8-7-3-9-2-8 1-5 3-1z" fill="#fb542b" />
      <path d="M7 8l4 1h5l4-1 3 3-2 4-2 1 1 3-5 4h-3l-5-4 1-3-2-1-2-4z" fill="#fff" />
      <path d="M10 21h7l-3.5 3z" fill="#fb542b" />
    </svg>
  ),
  slack: (
    <svg width="29" height="30" viewBox="0 0 29 30">
      <circle cx="14.5" cy="15" r="14.5" fill="#fafafa" stroke="#ddd" />
      <g strokeWidth="3.5" strokeLinecap="round" fill="none">
        <path d="M12 7v6M7 13h3" stroke="#36c5f0" />
        <path d="M18 7v6M23 13h-2" stroke="#2eb67d" />
        <path d="M18 23v-5M22 18h-2" stroke="#ecb22e" />
        <path d="M12 23v-5M7 18h3" stroke="#e01e5a" />
      </g>
    </svg>
  ),
  ai: (
    <svg width="28" height="34" viewBox="0 0 28 34">
      <rect width="28" height="34" rx="3" fill="#330000" />
      <text x="14" y="23" textAnchor="middle" fontSize="16" fontFamily="Open Sans" fill="#ff9a00">Ai</text>
    </svg>
  ),
};

const DODECAGON = "62,0 108,0 147,23 170,62 170,108 147,147 108,170 62,170 23,147 0,108 0,62 23,23";

const TABS = [
  ["File", 61], ["Home", 74, true], ["Insert", 70], ["Design", 79], ["Layout", 80], ["References", 110],
  ["Mailings", 92], ["Review", 81], ["View", 64], ["Developer", 80],
];

const Shape = ({ x, y, n }) => (
  <ShapeBox $x={x} $y={y}>
    <svg width="170" height="170" viewBox="-1 -1 172 172">
      <polygon points={DODECAGON} fill="#4472c4" stroke="#2f528f" strokeWidth="1.5" />
    </svg>
    <span>{n}</span>
  </ShapeBox>
);

const launcher = (
  <Launcher width="12" height="12" viewBox="0 0 12 12" fill="none" stroke="#666">
    <path d="M1 9V1h10v10H3" />
    <path d="M4 4l5 5M9 5v4H5" />
  </Launcher>
);

const hCells = Array.from({ length: 69 }, (_, i) => i);
const vCells = Array.from({ length: 54 }, (_, i) => i);

export default function App() {
  return (
    <Screen>
      <Global />
      <TitleBar>
        <Circuit width="680" height="43" viewBox="0 0 680 43" fill="none" stroke="#27508e" strokeWidth="3">
          <path d="M70 17H300" />
          <circle cx="65" cy="17" r="5" />
          <circle cx="288" cy="17" r="5" />
          <path d="M150 40h110M70 60a24 24 0 0 1 50-14" />
          <circle cx="420" cy="26" r="34" />
          <path d="M405 8h25l-15 26" />
          <path d="M555 43l18-18h55l20-25M610 43l25-18h45" />
        </Circuit>
        <AutoSave>AutoSave</AutoSave>
        <Toggle>Off</Toggle>
        <Qat $w={38} $ml={10}>
          <svg width="20" height="20" viewBox="0 0 20 20" fill="none" stroke="#fff" strokeWidth="1.2">
            <path d="M1 1h15l3 3v15H4l-3-3z" />
            <path d="M5 1v6h10V1M5 19v-8h10v8" />
          </svg>
        </Qat>
        <Qat $w={32}>
          <svg width="19" height="22" viewBox="0 0 19 22" fill="none" stroke="#fff" strokeWidth="1.3">
            <path d="M7 1L2 8l7 3" />
            <path d="M2 8c7-4 15-1 15 5 0 3-3 6-7 9" />
          </svg>
        </Qat>
        <Qat $w={10}><Chev c="#fff" /></Qat>
        <Qat $w={44}>
          <svg width="22" height="22" viewBox="0 0 22 22" fill="none" stroke="#4e75ad" strokeWidth="1.3">
            <path d="M15 3a9.5 9.5 0 1 1-8 0" />
            <path d="M15 1v5h5" />
          </svg>
        </Qat>
        <Qat $w={26}>
          <svg width="20" height="22" viewBox="0 0 20 22" fill="none" stroke="#fff" strokeWidth="1.2">
            <path d="M4 18V3a2 2 0 0 1 2-2h12v5h-3" />
            <path d="M15 1v17a3 3 0 0 1-3 3H1a2 2 0 0 0 3-3h8" />
          </svg>
        </Qat>
        <Qat $w={42}>
          <svg width="10" height="10" viewBox="0 0 10 10" fill="none" stroke="#fff" strokeWidth="1.1">
            <path d="M1 1.5h8M1 5l4 4 4-4" />
          </svg>
        </Qat>
        <DocTitle>Document1  -  Word</DocTitle>
        <UserName>Paul Young</UserName>
        <Avatar>PY</Avatar>
        <WinBtn>
          <svg width="17" height="16" viewBox="0 0 17 16" fill="none" stroke="#fff" strokeWidth="1.1">
            <path d="M.5.5h16v15H.5zM.5 3.5h16M8.5 13V6M5.5 9l3-3 3 3" />
          </svg>
        </WinBtn>
        <WinBtn>
          <svg width="14" height="2" viewBox="0 0 14 2" stroke="#fff"><path d="M0 1h14" /></svg>
        </WinBtn>
        <WinBtn>
          <svg width="13" height="14" viewBox="0 0 13 14" fill="none" stroke="#fff" strokeWidth="1.1">
            <path d="M.5 3.5h9v10h-9zM3.5 3.5v-3h9v10h-3" />
          </svg>
        </WinBtn>
        <WinBtn><X s={14} c="#fff" w={1.2} /></WinBtn>
      </TitleBar>

      <TabBar>
        {TABS.map(([label, w, on]) => (
          <Tab key={label} $w={w}>{on ? <b>{label}</b> : label}</Tab>
        ))}
        <TabActions>
          <ActionButton $w={84}><ShareIcon />Share</ActionButton>
          <ActionButton $w={124}><CommentIcon />Comments</ActionButton>
        </TabActions>
      </TabBar>

      <Ribbon>
        <Group $w={100}>
          <GroupBody>
            <PasteCol>
              <PasteIcon />
              <span>Paste</span>
              <BigChevron><Chev /></BigChevron>
            </PasteCol>
            <MiniCol>
              <ScissorsIcon />
              <CopyIcon />
              <BrushIcon />
            </MiniCol>
          </GroupBody>
          <GroupLabel $pr={21}>Clipboard</GroupLabel>
          {launcher}
        </Group>

        <Group $w={357}>
          <GroupBody $column $gap={11} $pad="10px 0 0 10px">
            <ToolRow>
              <Combo $w={133}>Calibri (Body)<Chev c="#333" /></Combo>
              <Combo $w={53}>11<Chev c="#333" /></Combo>
              <Tool $w={28}><GrowA $s={22}>A<i>^</i></GrowA></Tool>
              <Tool $w={30}><GrowA $s={19}>A<i>˅</i></GrowA></Tool>
              <Vr $ml={3} />
              <Tool $w={32} $size={17}>Aa</Tool>
              <Tool $w={12}><Chev /></Tool>
              <Vr $ml={9} />
              <Tool $w={36}><ClearIcon /></Tool>
            </ToolRow>
            <ToolRow>
              <Tool $w={28} $weight={700} $up>B</Tool>
              <Tool $w={28} $italic $up>I</Tool>
              <Tool $w={26} $under $up>U</Tool>
              <Tool $w={20}><Chev /></Tool>
              <Tool $w={30} $up><Strike>ab</Strike></Tool>
              <Tool $w={30} $weight={700} $up><span>x<sub>2</sub></span></Tool>
              <Tool $w={26} $weight={700} $up><span>x<sup>2</sup></span></Tool>
              <Vr $ml={3} />
              <Tool $w={30} $ml={3}><EffectA>A</EffectA></Tool>
              <Tool $w={10}><Chev /></Tool>
              <Tool $w={36} $ml={3}><PenMark /><ColorBar $c="#ffff00" /></Tool>
              <Tool $w={10}><Chev /></Tool>
              <Tool $w={36}><StackA>A</StackA><ColorBar $c="#ff0000" /></Tool>
              <Tool $w={10}><Chev /></Tool>
            </ToolRow>
          </GroupBody>
          <GroupLabel $pr={22}>Font</GroupLabel>
          {launcher}
        </Group>

        <Group $w={289}>
          <GroupBody $column $gap={11} $pad="10px 0 0 9px">
            <ToolRow>
              <Tool $w={28}><BulletIcon /></Tool>
              <Tool $w={16}><Chev /></Tool>
              <Tool $w={32}><NumberIcon /></Tool>
              <Tool $w={14}><Chev /></Tool>
              <Tool $w={28} $ml={4}><MultiIcon /></Tool>
              <Tool $w={10}><Chev /></Tool>
              <Vr $ml={13} />
              <Tool $w={34}><IndentIcon /></Tool>
              <Tool $w={22}><IndentIcon flip /></Tool>
              <Vr $ml={7} />
              <Tool $w={34}><SortIcon /></Tool>
              <Vr $ml={2} />
              <Tool $w={36} $size={20}>¶</Tool>
            </ToolRow>
            <ToolRow>
              <Tool $w={28} $on><AlignIcon x1={0} x2={[18, 12, 18, 12]} /></Tool>
              <Tool $w={28}><AlignIcon x1={[0, 3, 0, 3]} x2={[18, 15, 18, 15]} /></Tool>
              <Tool $w={28}><AlignIcon x1={[0, 6, 0, 6]} x2={18} /></Tool>
              <Tool $w={28}><AlignIcon x1={0} x2={18} /></Tool>
              <Vr $ml={5} />
              <Tool $w={32}><LineSpacingIcon /></Tool>
              <Tool $w={8}><Chev /></Tool>
              <Vr $ml={13} />
              <Tool $w={34}><ShadeIcon /></Tool>
              <Tool $w={12}><Chev /></Tool>
              <Tool $w={36}><BorderIcon /></Tool>
              <Tool $w={10}><Chev /></Tool>
            </ToolRow>
          </GroupBody>
          <GroupLabel $pr={14}>Paragraph</GroupLabel>
        </Group>

        <Group $w={505}>
          <GroupBody>
            <Gallery>
              <GalleryPeek>)</GalleryPeek>
              <GalleryScroll>
                <GalleryBtn><Chev c="#bbb" /></GalleryBtn>
                <GalleryBtn><Chev c="#444" /></GalleryBtn>
                <GalleryBtn>
                  <svg width="8" height="9" viewBox="0 0 8 9" fill="none" stroke="#444"><path d="M0 .5h8M1 3.5l3 3 3-3" /></svg>
                </GalleryBtn>
              </GalleryScroll>
            </Gallery>
          </GroupBody>
          <GroupLabel>Styles</GroupLabel>
          {launcher}
        </Group>

        <Group $w={112}>
          <GroupBody $column $gap={5} $pad="0 0 0 12px">
            <EditRow><EditIcon><Mag /></EditIcon><EditLabel $w={44}>Find</EditLabel><Chev /></EditRow>
            <EditRow><EditIcon><ReplaceIcon /></EditIcon><EditLabel>Replace</EditLabel></EditRow>
            <EditRow><EditIcon><SelectIcon /></EditIcon><EditLabel $mr={5}>Select</EditLabel><Chev /></EditRow>
          </GroupBody>
          <GroupLabel>Editing</GroupLabel>
        </Group>

        <Group $w={211}>
          <GroupBody>
            <BigBtn $w={134}>
              <BigIcon $low><PdfIcon /></BigIcon>
              <span>Create and Share</span>
              <span>Adobe PDF</span>
            </BigBtn>
            <BigBtn $w={58}>
              <BigIcon $low><SignIcon /></BigIcon>
              <span>Request</span>
              <span>Signatures</span>
            </BigBtn>
          </GroupBody>
          <GroupLabel>Adobe Acrobat</GroupLabel>
        </Group>

        <Group $w={73}>
          <GroupBody>
            <BigBtn $w={72}>
              <BigIcon><MicIcon /></BigIcon>
              <span>Dictate</span>
              <BigChevron><Chev /></BigChevron>
            </BigBtn>
          </GroupBody>
          <GroupLabel>Voice</GroupLabel>
        </Group>

        <Group $w={91}>
          <GroupBody>
            <BigBtn $w={90} $off>
              <BigIcon><SensIcon /></BigIcon>
              <span>Sensitivity</span>
              <BigChevron><Chev c="#aaa" /></BigChevron>
            </BigBtn>
          </GroupBody>
          <GroupLabel>Sensitivity</GroupLabel>
        </Group>

        <Group $w={72}>
          <GroupBody>
            <BigBtn $w={71}>
              <BigIcon><EditorIcon /></BigIcon>
              <span>Editor</span>
            </BigBtn>
          </GroupBody>
          <GroupLabel>Editor</GroupLabel>
        </Group>

        <Collapse width="12" height="8" viewBox="0 0 12 8" fill="none" stroke="#444" strokeWidth="1.1">
          <path d="M1 7l5-5 5 5" />
        </Collapse>
      </Ribbon>

      <Main>
        <NavPane>
          <NavHead>
            <NavTitle>Navigation</NavTitle>
            <NavHeadIcons>
              <svg width="12" height="7" viewBox="0 0 12 7"><path d="M0 0h12L6 7z" fill="#777" /></svg>
              <X />
            </NavHeadIcons>
          </NavHead>
          <NavSearch>
            Search document
            <NavSearchIcons>
              <svg width="15" height="15" viewBox="0 0 15 15" fill="none" stroke={BLUE} strokeWidth="1.8">
                <circle cx="9.5" cy="5.5" r="4" />
                <path d="M6.5 8.5L1 14" />
              </svg>
              <Chev />
            </NavSearchIcons>
          </NavSearch>
          <NavTabs>
            <NavTab $w={67} $on>Headings</NavTab>
            <NavTabSep $ml={12} />
            <NavTab $w={53} $ml={17}>Pages</NavTab>
            <NavTabSep $ml={0} />
            <NavTab $w={60} $ml={18}>Results</NavTab>
          </NavTabs>
          <NavText>Create an interactive outline of your document.</NavText>
          <NavText>It’s a great way to keep track of where you are or quickly<br />move your content around.</NavText>
          <NavText>To get started, go to the Home tab and apply Heading styles<br />to the headings in your document.</NavText>
        </NavPane>

        <DocArea>
          <SideCol>
            <Corner>
              <CornerInner>
                <svg width="8" height="8" viewBox="0 0 8 8"><path d="M0 0h2.5v5.5H8V8H0z" fill="#777" /></svg>
              </CornerInner>
            </Corner>
            <VRuler>
              <VRulerCells>
                {vCells.map((i) => {
                  const inch = Math.abs((i - 8) / 8);
                  if (i === 8) return <VCell key={i} />;
                  if (i % 8 === 0) return <VCell key={i}><b>{inch}</b></VCell>;
                  return <VCell key={i} $long={i % 4 === 0}><i /></VCell>;
                })}
              </VRulerCells>
            </VRuler>
          </SideCol>
          <PageCol>
            <HRuler>
              <HRulerCells>
                {hCells.map((i) => {
                  const inch = Math.abs((i - 8) / 8);
                  if (i === 8) return <HCell key={i} />;
                  if (i % 8 === 0) return <HCell key={i}>{inch}</HCell>;
                  return <HCell key={i} $long={i % 4 === 0}><i /></HCell>;
                })}
              </HRulerCells>
              <Indent width="11" height="9" viewBox="0 0 11 9">
                <path d="M5.5.5L10.5 5v3.5H.5V5z" fill="#fff" stroke="#777" />
              </Indent>
            </HRuler>
            <Page>
              <Shape x={142} y={168} n="1" />
              <Shape x={423} y={269} n="2" />
              <Shape x={117} y={419} n="3" />
              <Shape x={381} y={524} n="4" />
              <TextCursor />
            </Page>
          </PageCol>
        </DocArea>
      </Main>

      <StatusBar>
        <StatusItem $w={91}>Page 1 of 1</StatusItem>
        <StatusItem $w={71}>4 words</StatusItem>
        <StatusItem $w={44}>
          <svg width="18" height="19" viewBox="0 0 18 19" fill="none" stroke="#666">
            <path d="M1 2.5c3-1.5 6-1.5 8 0v14c-2-1.5-5-1.5-8 0zM9 2.5c2-1.5 5-1.5 8 0v8" />
            <path d="M10 14l3 3 5-6" />
          </svg>
        </StatusItem>
        <StatusItem $w={20}>
          <svg width="18" height="19" viewBox="0 0 18 19" fill="none" stroke="#666">
            <path d="M.5 1.5h17v16H.5zM.5 5h17M3 8h4M3 11h4M3 14h4" />
            <circle cx="12" cy="12" r="4" fill="#666" stroke="#f3f2f1" />
          </svg>
        </StatusItem>
        <StatusRight>
          <StatusItem $w={85}>
            <svg width="18" height="18" viewBox="0 0 18 18" fill="none" stroke="#555">
              <path d="M1 4V1h3M14 1h3v3M1 14v3h3M14 17h3v-3" />
              <path d="M5 3h5l3 3v9H5z" />
            </svg>
            Focus
          </StatusItem>
          <StatusItem $w={34}>
            <svg width="18" height="15" viewBox="0 0 18 15" fill="none" stroke="#666">
              <path d="M.5.5h17v14H.5zM9 .5v14M3 4h4M3 7h4M3 10h4M11 4h4M11 7h4M11 10h4" />
            </svg>
          </StatusItem>
          <StatusItem $w={50} $on $center>
            <svg width="14" height="17" viewBox="0 0 14 17" fill="none" stroke="#444">
              <path d="M.5.5h13v16H.5zM3 4h8M3 7h8M3 10h8M3 13h8" />
            </svg>
          </StatusItem>
          <StatusItem $w={48} $center>
            <svg width="18" height="17" viewBox="0 0 18 17" fill="none" stroke="#666">
              <path d="M.5.5h13v15H.5zM.5 3.5h13M3 7h5M3 10h3" />
              <circle cx="12.5" cy="11.5" r="4.5" fill="#f3f2f1" />
              <path d="M8 11.5h9M12.5 7v9" />
            </svg>
          </StatusItem>
          <StatusItem $w={25} $center>
            <svg width="9" height="3" viewBox="0 0 9 3" stroke="#666"><path d="M0 1.5h9" /></svg>
          </StatusItem>
          <Slider />
          <StatusItem $w={20} $center>
            <svg width="9" height="9" viewBox="0 0 9 9" stroke="#666"><path d="M0 4.5h9M4.5 0v9" /></svg>
          </StatusItem>
          <StatusItem $w={33} $ml={13}>100%</StatusItem>
        </StatusRight>
      </StatusBar>

      <Taskbar>
        <StartBtn><FaWindows size={20} color="#000" /></StartBtn>
        <TaskSearch>
          <Mag c="#222" s={21} />
          Type here to search
        </TaskSearch>
        <TaskCell>{TASK_ICONS.cortana}</TaskCell>
        <TaskCell>{TASK_ICONS.taskview}</TaskCell>
        <TaskCell>{TASK_ICONS.explorer}</TaskCell>
        <TaskCell>{TASK_ICONS.store}</TaskCell>
        <TaskCell>{TASK_ICONS.mail}</TaskCell>
        <TaskCell>{TASK_ICONS.office}</TaskCell>
        <TaskCell $open>{TASK_ICONS.discord}</TaskCell>
        <TaskCell $open $active>{TASK_ICONS.word}</TaskCell>
        <TaskCell>{TASK_ICONS.chrome}</TaskCell>
        <TaskCell $open>{TASK_ICONS.edge}</TaskCell>
        <TaskCell>{TASK_ICONS.vs}</TaskCell>
        <TaskCell $open>{TASK_ICONS.brave}</TaskCell>
        <TaskCell $open>{TASK_ICONS.slack}</TaskCell>
        <TaskCell $open>{TASK_ICONS.ai}</TaskCell>
        <Tray>
          <TrayIcon>
            <svg width="16" height="9" viewBox="0 0 16 9" fill="none" stroke="#222" strokeWidth="1.1"><path d="M1 8l7-7 7 7" /></svg>
          </TrayIcon>
          <TrayIcon>
            <svg width="21" height="13" viewBox="0 0 21 13">
              <path d="M4 12.5a3.5 3.5 0 0 1-.5-7A6 6 0 0 1 14 3.5a4.5 4.5 0 0 1 6.500 5 4 4 0 0 1-3 4z" fill="#777" />
              <path d="M4 12.5c3-5 9-5 13.5 0z" fill="#f1f1f1" />
            </svg>
          </TrayIcon>
          <TrayIcon>
            <svg width="21" height="14" viewBox="0 0 21 14">
              <rect x="5" y="3" width="15" height="9" fill="#222" />
              <path d="M2 0v3M4 0v3M1 3h4v3H3.5v4" stroke="#222" fill="none" />
            </svg>
          </TrayIcon>
          <TrayIcon>
            <svg width="20" height="18" viewBox="0 0 20 18" fill="none" stroke="#222">
              <path d="M1 6h3l5-4v14l-5-4H1z" />
              <path d="M12 6c1 2 1 4 0 6" />
              <path d="M15 3c2 4 2 8 0 12" stroke="#999" />
              <path d="M18 1c2 5 2 11 0 16" stroke="#bbb" />
            </svg>
          </TrayIcon>
          <TrayIcon><FaDropbox size={19} color="#111" /></TrayIcon>
          <Clock>
            <span>6:07 PM</span>
            <span>3/31/2021</span>
          </Clock>
          <Notify>
            <svg width="20" height="18" viewBox="0 0 20 18">
              <rect width="20" height="18" fill="#000" />
              <path d="M3 5h14M3 9h14" stroke="#fff" strokeWidth="1.2" />
            </svg>
            <NotifyBadge>13</NotifyBadge>
          </Notify>
          <ShowDesktop />
        </Tray>
      </Taskbar>

      <SearchMenu>
        <SearchInput>
          <Mag c="#444" s={18} />
          <Caret />
          Search
        </SearchInput>
        <MenuBody>
          <MenuHead $h={45} $pt={7}>Recently Used Actions</MenuHead>
          <MenuRow $on><MenuIcon><ShapesIcon /></MenuIcon>Shapes<Arrow /></MenuRow>
          <MenuRow><MenuIcon><ClearIcon /></MenuIcon>Clear All Formatting</MenuRow>
          <MenuRow><MenuIcon><WordCountIcon /></MenuIcon>Word Count</MenuRow>
          <MenuLine />
          <MenuHead $h={42} $pt={7}>Suggested Actions</MenuHead>
          <MenuRow><MenuIcon><ShapesIcon /></MenuIcon>Draw a Shape<Arrow /></MenuRow>
          <MenuRow><MenuIcon><TextBoxIcon /></MenuIcon>Text Box</MenuRow>
          <MenuRow><MenuIcon><FractionIcon /></MenuIcon>Fraction<Arrow /></MenuRow>
        </MenuBody>
      </SearchMenu>
    </Screen>
  );
}
